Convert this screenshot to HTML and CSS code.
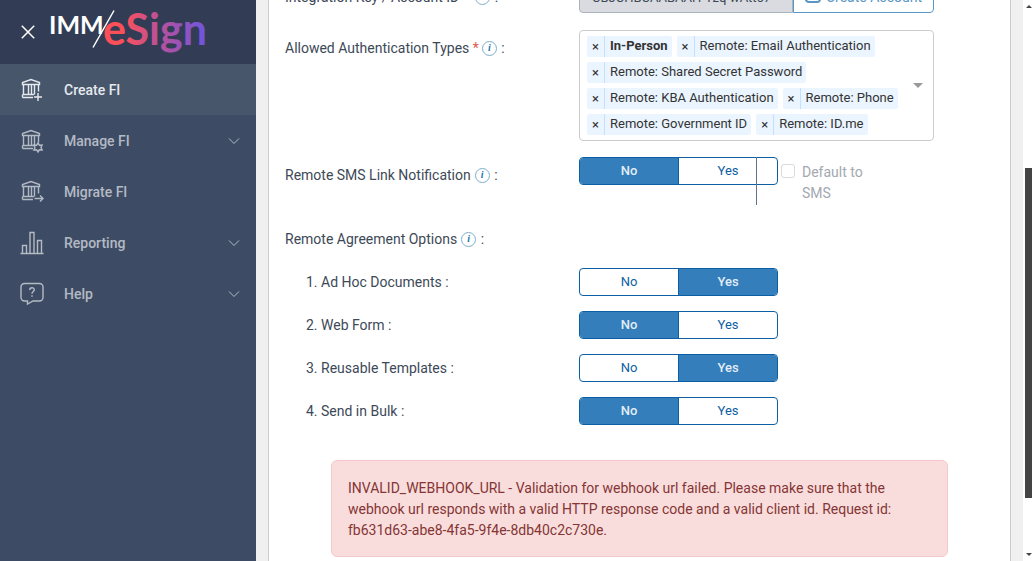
FILE: index.html
```
<!DOCTYPE html>
<html lang="en">
<head>
    <meta charset="utf-8">
    <title>Create FI</title>
    <link rel="stylesheet" href="styles.css">
</head>

<body>
<svg class="defs" aria-hidden="true">
    <symbol id="bank" viewBox="0 0 24 24">
        <path d="M2.500 6.500V4.500L11 1.500l8.500 3v2zM3.500 6.500v10M8.500 6.500v10M11.500 6.500v10M14.500 6.500v10M18.500 6.500v7M2.500 16.500h11.500M2.500 19.500h10.500M2.500 16.500v3"/>
    </symbol>
    <symbol id="chevron" viewBox="0 0 12 8">
        <path d="M1 1.500l5 5 5-5"/>
    </symbol>
</svg>

<aside class="sidebar">
    <div class="brand">
        <button class="close" type="button" aria-label="Close menu">
            <svg width="14" height="14" viewBox="0 0 14 14"><path d="M.8.8l12.400 12.400M13.200.8L.8 13.200"/></svg>
        </button>
        <svg class="logo" width="164" height="56" viewBox="0 0 164 56" role="img" aria-label="IMM/eSign">
            <defs>
                <linearGradient id="sign" x1="0" x2="1" y1="0" y2="0">
                    <stop offset="0" stop-color="#ff4f58"/>
                    <stop offset=".2" stop-color="#fb5059"/>
                    <stop offset=".55" stop-color="#b9519c"/>
                    <stop offset="1" stop-color="#6b56e0"/>
                </linearGradient>
            </defs>
            <text class="logo-imm" x="0" y="34">IMM</text>
            <path class="logo-slash" d="M65 10.500L44 47.500"/>
            <text class="logo-sign" x="54" y="45">eSign</text>
        </svg>
    </div>
    <nav class="menu">
        <a class="menu-item active" href="#">
            <svg class="menu-icon" viewBox="0 0 24 24"><use href="#bank"/><path d="M18 15v8M14 19h8"/></svg>
            <span>Create FI</span>
        </a>
        <a class="menu-item" href="#">
            <svg class="menu-icon" viewBox="0 0 24 24"><use href="#bank"/><path d="M18 14l1.400 2.200 2.700-.1L21 18.500l1.100 2.400-2.700-.1L18 23l-1.400-2.200-2.700.1 1.100-2.400-1.100-2.400 2.700.1z"/></svg>
            <span>Manage FI</span>
            <svg class="chevron" viewBox="0 0 12 8"><use href="#chevron"/></svg>
        </a>
        <a class="menu-item" href="#">
            <svg class="menu-icon" viewBox="0 0 24 24"><use href="#bank"/><path d="M14.500 18.500h8.500M20 15.500l3 3-3 3"/></svg>
            <span>Migrate FI</span>
        </a>
        <a class="menu-item" href="#">
            <svg class="menu-icon" viewBox="0 0 24 24"><path d="M.5 22.500h23M2.500 22v-7.500h4V22M10 22V1.500h4V22M17.500 22V9.500h4V22"/></svg>
            <span>Reporting</span>
            <svg class="chevron" viewBox="0 0 12 8"><use href="#chevron"/></svg>
        </a>
        <a class="menu-item" href="#">
            <svg class="menu-icon" viewBox="0 0 24 24"><path d="M4.500 1.500h15a3.500 3.500 0 0 1 3.500 3.500v10.500a3.500 3.500 0 0 1-3.500 3.500H13l-5.500 3V19h-3A3.500 3.500 0 0 1 1 15.500V5a3.500 3.500 0 0 1 3.500-3.500zM9.700 8c0-3 4.600-3 4.600-.2 0 1.700-2.300 1.900-2.300 3.900M12 13.300v1.500"/></svg>
            <span>Help</span>
            <svg class="chevron" viewBox="0 0 12 8"><use href="#chevron"/></svg>
        </a>
    </nav>
</aside>

<main class="content">
    <form class="panel">
        <div class="row">
            <div class="row-label">
                <label for="integration-key">Integration Key / Account ID</label> <span class="required">*</span>
                <button class="info" type="button" aria-label="About integration key">i</button> :
            </div>
            <div class="input-group">
                <input id="integration-key" type="text" value="CBJCHBCAABAAH-Yzq-wAtt67" readonly>
                <button class="create" type="button">
                    <svg width="16" height="12" viewBox="0 0 16 12"><path d="M4 11h8a3 3 0 0 0 0-6 4.500 4.500 0 0 0-8-1 3.500 3.500 0 0 0 0 7z"/></svg>
                    Create Account
                </button>
            </div>
        </div>

        <div class="row">
            <div class="row-label">
                Allowed Authentication Types <span class="required">*</span><button class="info" type="button" aria-label="About authentication types">i</button> :
            </div>
            <div class="multi-select">
                <div class="tags">
                    <div class="tag locked"><button type="button" aria-label="Remove In-Person">×</button><span>In-Person</span></div>
                    <div class="tag"><button type="button" aria-label="Remove Email Authentication">×</button><span>Remote: Email Authentication</span></div>
                    <div class="tag"><button type="button" aria-label="Remove Shared Secret Password">×</button><span>Remote: Shared Secret Password</span></div>
                    <div class="tag"><button type="button" aria-label="Remove KBA Authentication">×</button><span>Remote: KBA Authentication</span></div>
                    <div class="tag"><button type="button" aria-label="Remove Phone">×</button><span>Remote: Phone</span></div>
                    <div class="tag"><button type="button" aria-label="Remove Government ID">×</button><span>Remote: Government ID</span></div>
                    <div class="tag"><button type="button" aria-label="Remove ID.me">×</button><span>Remote: ID.me</span></div>
                </div>
                <button class="arrow" type="button" aria-label="Open list"></button>
            </div>
        </div>

        <div class="row">
            <div class="row-label">
                Remote SMS Link Notification<button class="info" type="button" aria-label="About SMS notification">i</button> :
            </div>
            <div class="sms">
                <div class="toggle">
                    <button class="on" type="button">No</button>
                    <button type="button">Yes</button>
                </div>
                <div class="sms-default">
                    <input id="default-sms" type="checkbox" disabled>
                    <label for="default-sms">Default to SMS</label>
                </div>
            </div>
        </div>

        <div class="row">
            <div class="row-label">
                Remote Agreement Options<button class="info" type="button" aria-label="About agreement options">i</button> :
            </div>
        </div>

        <div class="options">
            <div class="option">
                <span>1. Ad Hoc Documents :</span>
                <div class="toggle">
                    <button type="button">No</button>
                    <button class="on" type="button">Yes</button>
                </div>
            </div>
            <div class="option">
                <span>2. Web Form :</span>
                <div class="toggle">
                    <button class="on" type="button">No</button>
                    <button type="button">Yes</button>
                </div>
            </div>
            <div class="option">
                <span>3. Reusable Templates :</span>
                <div class="toggle">
                    <button type="button">No</button>
                    <button class="on" type="button">Yes</button>
                </div>
            </div>
            <div class="option">
                <span>4. Send in Bulk :</span>
                <div class="toggle">
                    <button class="on" type="button">No</button>
                    <button type="button">Yes</button>
                </div>
            </div>
        </div>

        <div class="alert" role="alert">
            INVALID_WEBHOOK_URL - Validation for webhook url failed. Please make sure that the webhook url responds with a valid HTTP response code and a valid client id. Request id: fb631d63-abe8-4fa5-9f4e-8db40c2c730e.
        </div>
    </form>
</main>

<div class="scrollbar" aria-hidden="true">
    <div class="scroll-up"></div>
    <div class="track-above"></div>
    <div class="thumb"></div>
    <div class="track-below"></div>
    <div class="scroll-down"></div>
</div>

</body>
</html>
```

FILE: styles.css
```
* {
box-sizing: border-box;
}
body {
margin: 0;
display: flex;
height: 100vh;
overflow: hidden;
background: #f0f0f0;
color: #3d4957;
font-family: Roboto, "Liberation Sans", sans-serif;
font-size: 14px;
line-height: 21px;
}
button, input {
font: inherit;
color: inherit;
margin: 0;
padding: 0;
border: 0;
background: none;
}
.defs {
position: absolute;
width: 0;
height: 0;
}

/* sidebar */
.sidebar {
flex: 0 0 256px;
background: #3d4c64;
}
.brand {
display: flex;
align-items: center;
gap: 14px;
height: 64px;
padding-left: 21px;
background: #323d55;
}
.brand .close {
display: flex;
stroke: #fff;
stroke-width: 1.5;
}
.logo {
align-self: flex-start;
}
.logo-imm {
font-family: Lato, sans-serif;
font-size: 25px;
font-weight: 700;
fill: #fff;
}
.logo-sign {
font-family: Lato, sans-serif;
font-size: 43px;
font-weight: 700;
fill: url(#sign);
}
.logo-slash {
stroke: #fff;
stroke-width: 1.5;
}
.menu-item {
display: flex;
align-items: center;
height: 51px;
padding: 0 16px 0 20px;
color: #b4bac4;
font-weight: 500;
text-decoration: none;
}
.menu-item.active {
background: #48566c;
color: #e6e9ed;
}
.menu-item span {
padding-top: 2px;
}
.menu-item svg {
fill: none;
stroke: currentColor;
}
.menu-item .menu-icon {
width: 24px;
height: 24px;
margin-right: 20px;
stroke-width: 1.4;
}
.chevron {
width: 12px;
height: 8px;
margin-left: auto;
}

/* form */
.content {
flex: 1;
min-width: 0;
padding: 0 12px;
overflow: hidden;
}
.panel {
min-height: 120vh;
margin-top: -37px;
padding: 16px 62px 16px 16px;
background: #fff;
border: 1px solid #ccc;
border-width: 0 1px;
}
.row {
display: grid;
grid-template-columns: 294px minmax(0, 1fr);
padding-right: 14px;
margin-bottom: 16px;
}
.row-label {
padding: 8px 0 6px;
}
.required {
color: #e2574c;
}
.info {
width: 15px;
height: 15px;
margin: 0 1px 0 4px;
border: 1px solid #7fadc9;
border-radius: 50%;
color: #1c76ad;
font: italic bold 10px/12px "Liberation Serif", serif;
vertical-align: 2px;
text-align: center;
}
.required + .info {
margin-left: 3px;
}
.input-group {
display: flex;
height: 34px;
}
.input-group input {
flex: 1;
min-width: 0;
padding: 2px 12px 0;
border: 1px solid #adb3be;
border-radius: 4px 0 0 4px;
background: #d9dbe0;
font-size: 13px;
}
.create {
display: flex;
align-items: center;
justify-content: center;
gap: 5px;
width: 141px;
padding-top: 2px;
border: 1px solid #5a96c6;
border-radius: 0 4px 4px 0;
color: #5a96c6;
}
.create svg {
fill: none;
stroke: currentColor;
stroke-width: 2;
}
.multi-select {
display: flex;
align-items: center;
padding: 5px 10px 5px 7px;
border: 1px solid #ccc;
border-radius: 4px;
}
.tags {
flex: 1;
display: flex;
flex-wrap: wrap;
gap: 5px;
}
.tag {
display: flex;
height: 21px;
border-radius: 2px;
background: #ebf5ff;
color: #333;
font-size: 13px;
line-height: 20px;
}
.tag button {
width: 18px;
border-right: 1px solid #c2e0ff;
}
.tag span {
padding: 0 4px 0 5px;
}
.tag.locked span {
font-weight: 700;
}
.arrow {
border: 5px solid transparent;
border-top-color: #999;
border-bottom: 0;
}
.toggle {
display: flex;
width: 199px;
height: 28px;
border: 1px solid #0d5fa3;
border-radius: 4px;
overflow: hidden;
background: #fff;
color: #0d5fa3;
font-size: 13px;
}
.toggle button {
flex: 1;
padding-bottom: 1px;
}
.toggle button + button {
border-left: 1px solid #0d5fa3;
}
.toggle .on {
background: #337ebb;
color: #e3edf6;
font-weight: 500;
}
.sms {
display: flex;
}
.sms-default {
position: relative;
display: flex;
width: 130px;
height: 48px;
margin-left: -22px;
padding: 5px 0 1px 24px;
border-left: 1px solid #60748f;
color: #a3a8b1;
}
.sms-default input {
appearance: none;
flex: none;
width: 14px;
height: 14px;
margin: 2px 7px 0 0;
border: 1px solid #d8dade;
border-radius: 3px;
background: #fff;
}
.options {
display: grid;
gap: 15px;
margin-top: -4px;
padding-left: 21px;
}
.option {
display: grid;
grid-template-columns: 273px minmax(0, 1fr);
align-items: center;
}
.alert {
margin: 35px 0 0 46px;
padding: 17px 16px 15px;
border: 1px solid #f4c9cb;
border-radius: 6px;
background: #f9dddd;
color: #843534;
}

/* page scrollbar */
.scrollbar {
flex: 0 0 11px;
display: flex;
flex-direction: column;
align-items: center;
padding: 5px 0;
background: #fff;
}
.scroll-up, .scroll-down {
border: 3px solid transparent;
}
.scroll-up {
border-top: 0;
border-bottom-color: #444;
}
.scroll-down {
border-bottom: 0;
border-top-color: #444;
}
.track-above {
flex: 160;
}
.thumb {
flex: 330;
width: 7px;
background: #444;
}
.track-below {
flex: 55;
}
```
